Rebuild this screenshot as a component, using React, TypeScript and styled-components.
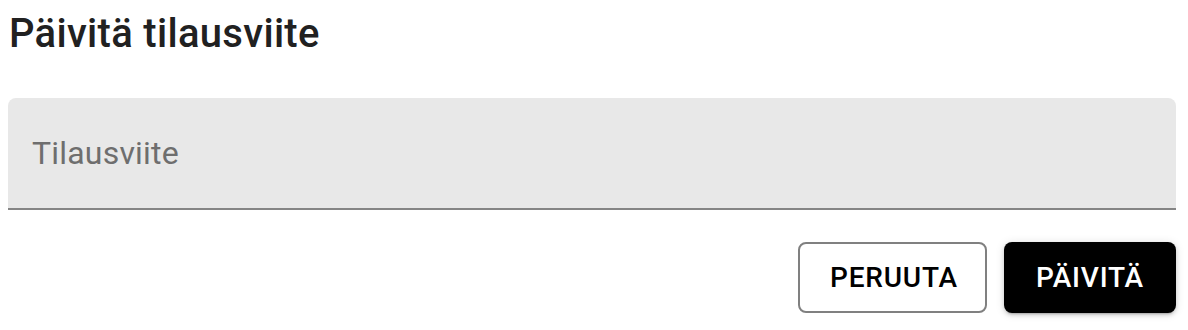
import React from "react";
import styled, { createGlobalStyle } from "styled-components";

const Global = createGlobalStyle`
  html, body { margin: 0; padding: 0; background: #ffffff; }
  body { font-family: Roboto, "Noto Sans", Arial, sans-serif; }
`;

const Dialog = styled.div`
  width: 1188px;
  height: 330px;
  box-sizing: border-box;
  padding: 2px 12px 0 8px;
  display: flex;
  flex-direction: column;
`;

const Title = styled.h2`
  margin: 0;
  padding-left: 1px;
  font-family: Roboto, sans-serif;
  font-weight: 500;
  font-size: 40px;
  line-height: 64px;
  letter-spacing: 0.3px;
  color: #212121;
`;

const Field = styled.div`
  margin-top: 32px;
  height: 110px;
  background: #e8e8e8;
  border-radius: 8px 8px 0 0;
  border-bottom: 2px solid #858585;
  display: flex;
  align-items: center;
  padding-left: 24px;
`;

const Placeholder = styled.span`
  font-family: Roboto, sans-serif;
  font-size: 32px;
  color: #6e6e6e;
  letter-spacing: 0.2px;
`;

const Actions = styled.div`
  margin-top: 32px;
  display: flex;
  justify-content: flex-end;
  gap: 17px;
`;

const Button = styled.button<{ $variant: "outlined" | "contained" }>`
  box-sizing: border-box;
  height: 71px;
  border-radius: 8px;
  font-family: Roboto, sans-serif;
  font-weight: 500;
  font-size: 28px;
  letter-spacing: 0.8px;
  text-transform: uppercase;
  cursor: pointer;
  padding: 0 30px;
  ${(p) =>
    p.$variant === "outlined"
      ? `
    width: 189px;
    background: #ffffff;
    color: #000000;
    border: 2px solid #808080;
  `
      : `
    width: 172px;
    background: #000000;
    color: #ffffff;
    border: none;
    box-shadow: 0 3px 2px -2px rgba(0,0,0,0.2), 0 2px 4px 0 rgba(0,0,0,0.14), 0 1px 10px 0 rgba(0,0,0,0.12);
  `}
`;

export default function App() {
  return (
    <>
      <Global />
      <Dialog>
        <Title>Päivitä tilausviite</Title>
        <Field>
          <Placeholder>Tilausviite</Placeholder>
        </Field>
        <Actions>
          <Button $variant="outlined">Peruuta</Button>
          <Button $variant="contained">Päivitä</Button>
        </Actions>
      </Dialog>
    </>
  );
}
